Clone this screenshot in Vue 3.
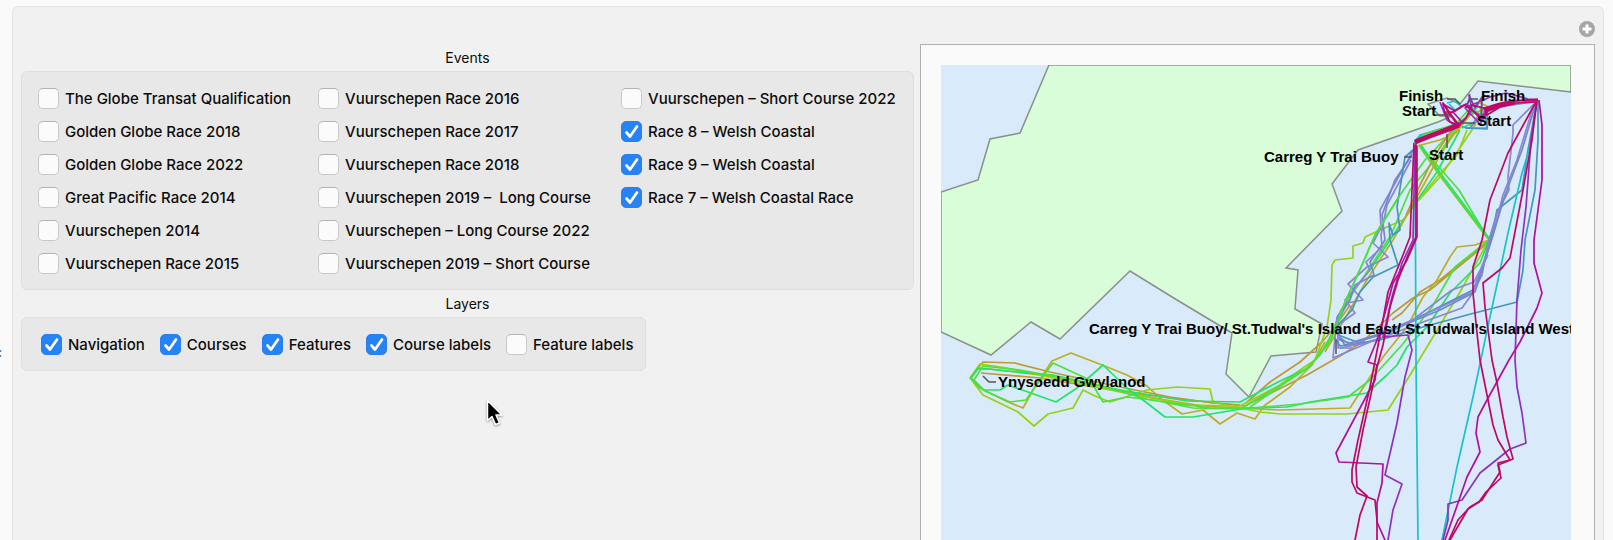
<script setup>
import { ref } from 'vue'

const eventColumns = ref([
  [
    { name: 'The Globe Transat Qualification', on: false },
    { name: 'Golden Globe Race 2018', on: false },
    { name: 'Golden Globe Race 2022', on: false },
    { name: 'Great Pacific Race 2014', on: false },
    { name: 'Vuurschepen 2014', on: false },
    { name: 'Vuurschepen Race 2015', on: false },
  ],
  [
    { name: 'Vuurschepen Race 2016', on: false },
    { name: 'Vuurschepen Race 2017', on: false },
    { name: 'Vuurschepen Race 2018', on: false },
    { name: 'Vuurschepen 2019 –  Long Course', on: false },
    { name: 'Vuurschepen – Long Course 2022', on: false },
    { name: 'Vuurschepen 2019 – Short Course', on: false },
  ],
  [
    { name: 'Vuurschepen – Short Course 2022', on: false },
    { name: 'Race 8 – Welsh Coastal', on: true },
    { name: 'Race 9 – Welsh Coastal', on: true },
    { name: 'Race 7 – Welsh Coastal Race', on: true },
  ],
])

const layers = ref([
  { name: 'Navigation', on: true },
  { name: 'Courses', on: true },
  { name: 'Features', on: true },
  { name: 'Course labels', on: true },
  { name: 'Feature labels', on: false },
])

const tracks = [
  // western leg
  { c: 'orange', p: '1489,242 1430,290 1413,298 1393,313 1362,342 1340,356 1307,375 1273,392 1245,406 1170,398 1100,388 1040,378 981,373' },
  { c: 'orange', p: '1489,240 1440,280 1420,292 1402,313 1392,320' },
  { c: 'olive', p: '1489,240 1475,245 1457,247 1450,257 1437,280 1423,297 1407,327 1383,357 1350,408 1280,410 1240,408 1203,406 1160,399 1110,388 1050,376 990,369 978,369 971,378 978,387 1008,402 1023,408 1033,390 1052,361 1071,353 1102,365 1127,375 1147,386 1160,398 1182,414 1203,410 1220,424 1237,413 1255,419 1264,406 1290,387 1312,365 1325,342' },
  { c: 'orange', p: '1240,405 1213,403 1170,397 1120,387 1050,372 1015,363 983,362 973,374' },
  { c: 'orange', p: '1246,403 1270,382 1300,362 1322,342 1334,328 1350,305' },
  { c: 'lime', p: '1489,240 1460,292 1433,337 1407,380 1388,410 1347,414 1280,414 1260,412 1230,406 1213,402 1210,389 1177,387 1147,390 1110,402 1095,396 1083,390 1073,408 1048,414 1034,426 1018,412 983,395 970,378 980,364 1007,368 1053,378 1120,392 1187,405 1240,406 1280,385 1300,370 1315,360 1327,327 1331,300 1332,265 1335,260 1353,258 1353,246 1363,243 1365,237 1380,230 1403,220 1417,202 1437,177 1457,155 1467,130' },
  { c: 'green', p: '1489,240 1480,263 1450,293 1427,327 1407,347 1397,365 1387,375 1367,393 1310,402 1287,407 1247,408 1193,417 1165,417 1147,403 1127,388 1103,365 1077,388 1056,402 1028,392 1008,385 1000,390 983,390 971,378 978,368 1007,371 1053,375 1120,390 1187,401 1240,402 1280,381 1306,369 1320,355 1337,325 1350,295 1372,267 1400,225 1437,172 1460,130' },
  { c: 'leaf', p: '1489,240 1455,267 1432,307 1402,345 1370,380 1348,397 1300,404 1240,409 1193,408 1153,400 1127,397 1103,402 1090,380 1053,363 1035,387 1026,400 1010,402 985,391 974,380 983,366 1020,370 1090,383 1150,400 1210,408 1242,408 1282,384 1308,368 1327,345 1341,310 1365,275 1391,235 1410,190 1437,157 1458,125' },
  { c: 'leaf', p: '1421,147 1430,157 1459,190 1489,240' },
  { c: 'olive', p: '1420,147 1440,176 1488,239' },
  { c: 'green', p: '1421,145 1441,174 1489,238' },
  { c: 'leaf', p: '1419,145 1442,178 1487,237' },
  { c: 'leaf', p: '1458,125 1425,160 1400,195 1375,235 1362,265 1345,302 1330,342 1310,366 1250,407' },
  { c: 'olive', p: '1462,122 1440,155 1418,195 1393,240 1368,278 1343,322 1325,352' },
  { c: 'orange', p: '1455,125 1435,155 1420,185 1406,215' },
  { c: 'lime', p: '1476,124 1455,155 1440,177 1419,200' },

  // outbound, western shore
  { c: 'indigo', p: '1413,150 1408,160 1380,210 1381,227 1373,243 1388,257 1367,267 1348,284 1363,300 1347,303 1337,317 1335,337 1333,358 1370,342' },
  { c: 'slate', p: '1412,155 1395,180 1382,215 1385,240 1370,262 1374,275 1355,285 1350,300 1338,318 1338,335 1345,345 1365,342' },
  { c: 'indigo', p: '1411,160 1387,205 1381,235 1382,247 1366,262 1370,270 1345,300 1355,313 1338,325 1338,348 1352,348' },
  { c: 'blue', p: '1413,150 1405,157 1397,207 1400,230 1393,235 1389,223 1390,240 1398,265 1373,277 1360,292 1352,310 1338,325 1340,340 1357,345 1385,337' },
  { c: 'leaf', p: '1400,195 1375,235 1362,265 1345,302 1330,342' },

  // return, eastern side
  { c: 'blue', p: '1538,100 1538,140 1535,190 1525,240 1523,270 1517,302 1467,315 1423,327 1380,340 1340,346 1335,338' },
  { c: 'blue', p: '1537,101 1528,150 1522,190 1497,210 1493,230 1483,267 1473,290 1437,308 1390,332 1357,342 1338,335' },
  { c: 'indigo', p: '1534,104 1513,125 1513,133 1508,177 1509,190 1497,213 1488,243 1482,275 1472,294 1462,308 1423,322 1370,342 1340,348' },
  { c: 'indigo', p: '1534,104 1517,160 1503,195 1493,235 1473,292 1430,312 1385,332 1350,345 1338,336' },
  { c: 'slate', p: '1535,106 1522,150 1505,195 1490,245 1475,292 1440,310 1392,330 1350,343' },
  { c: 'indigo', p: '1488,255 1474,282 1452,290 1410,322' },
  { c: 'cyan', p: '1537,100 1530,147 1522,173 1508,233 1498,280 1485,340 1473,397 1457,467 1442,540 1430,600 1430,640' },
  { c: 'cyan', p: '1415,145 1416,360 1418,540 1420,640' },
  { c: 'purple', p: '1537,100 1531,140 1526,207 1521,250 1517,300 1515,360 1517,387 1522,413 1526,443 1510,449 1480,473 1462,500 1448,504 1448,520 1443,540 1430,640' },
  { c: 'purple', p: '1415,145 1413,240 1402,263 1392,297 1383,337 1408,335 1412,350 1405,377 1397,423 1385,475 1402,484 1393,510 1388,540 1388,640' },
  { c: 'magenta', p: '1539,100 1542,125 1542,180 1534,240 1534,263 1542,293 1537,308 1520,342 1509,360 1487,400 1478,417 1476,433 1480,452 1467,477 1458,503 1445,540 1430,640' },
  { c: 'magenta', p: '1417,145 1417,237 1407,260 1393,283 1385,313 1377,340 1368,362 1377,365 1375,380 1336,453 1339,462 1383,464 1382,483 1377,503 1377,522 1385,540 1400,640' },
  { c: 'crimson', p: '1537,100 1526,120 1508,153 1490,200 1482,240 1473,267 1473,293 1477,333 1480,360 1493,425 1498,440 1510,460 1498,463 1500,472 1482,500 1470,507 1458,520 1449,540 1430,600' },
  { c: 'crimson', p: '1537,100 1532,140 1523,190 1510,258 1502,268 1483,283 1485,307 1492,360 1497,383 1503,417 1507,437 1513,459 1498,465 1501,478 1486,492 1479,502 1468,509 1450,540 1430,600' },
  { c: 'crimson', p: '1414,143 1410,237 1403,255 1388,292 1383,320 1370,387 1358,440 1352,470 1352,482 1357,493 1375,500 1377,520 1377,540 1377,640' },
  { c: 'crimson', p: '1416,143 1416,237 1408,255 1398,280 1390,307 1383,345 1377,367 1363,430 1356,467 1357,487 1367,496 1360,515 1355,540 1350,640' },

  // harbour approaches
  { c: 'cyan', p: '1447,103 1455,101 1462,107 1455,110 1449,104' },
  { c: 'green', p: '1415,141 1422,135 1445,128 1458,123 1470,115 1478,106 1484,112 1475,122 1462,128' },
  { c: 'cyan', p: '1414,143 1420,135 1440,129 1459,126 1468,128 1487,128 1485,118 1470,107' },
  { c: 'leaf', p: '1416,144 1424,134 1456,124 1470,108 1482,102 1480,120 1470,126' },
  { c: 'green', p: '1415,142 1421,137 1443,130 1464,121 1475,110 1466,106' },
  { c: 'olive', p: '1417,146 1440,140 1456,133 1470,115 1489,107 1480,103' },
  { c: 'indigo', p: '1537,101 1500,107 1485,113 1470,128 1478,116 1468,104 1470,94' },
  { c: 'blue', p: '1537,100 1500,106 1487,110 1487,129 1465,128' },
  { c: 'purple', p: '1440,102 1447,120 1458,127 1472,110 1469,95 1475,108 1482,97 1481,125 1465,108 1490,97 1506,93 1528,99 1538,100' },
  { c: 'magenta', p: '1415,142 1444,129 1462,122 1453,112 1445,115 1443,104 1455,111 1466,104 1480,118 1492,106 1510,101 1538,99' },
  { c: 'crimson heavy', p: '1415,142 1430,136 1452,128 1459,125' },
  { c: 'crimson', p: '1459,127 1449,113 1443,103 1452,116 1459,125 1450,122 1445,112 1453,112 1464,105 1472,110 1483,119 1490,107 1500,104 1515,101 1538,100' },
  { c: 'crimson', p: '1459,126 1466,118 1472,105 1484,108 1487,115 1500,107 1515,103 1537,102' },
  { c: 'crimson heavy', p: '1484,110 1500,105 1515,102' },
]

const places = [
  { x: 1399, y: 101, t: 'Finish' },
  { x: 1402, y: 116, t: 'Start' },
  { x: 1481, y: 101, t: 'Finish' },
  { x: 1477, y: 126, t: 'Start' },
  { x: 1429, y: 160, t: 'Start' },
  { x: 1264, y: 162, t: 'Carreg Y Trai Buoy' },
  { x: 1089, y: 334, t: "Carreg Y Trai Buoy/ St.Tudwal's Island East/ St.Tudwal's Island West" },
  { x: 998, y: 387, t: 'Ynysoedd Gwylanod' },
]
</script>

<template>
  <div class="page">
    <span class="prompt">:</span>
    <main class="panel">
      <header class="bar">
        <button class="more" type="button" aria-label="Options">
          <svg viewBox="0 0 16 16" width="16" height="16">
            <circle cx="8" cy="8" r="8" fill="#a6a6a6" />
            <path d="M8 3.5v9M3.5 8h9" stroke="#fff" stroke-width="3" />
          </svg>
        </button>
      </header>

      <div class="columns">
        <div class="controls">
          <h2 class="heading">Events</h2>
          <div class="group events">
            <div v-for="(column, i) in eventColumns" :key="i" class="column">
              <label v-for="item in column" :key="item.name" class="option">
                <input v-model="item.on" class="tick" type="checkbox" />
                <span>{{ item.name }}</span>
              </label>
            </div>
          </div>
          <h2 class="heading">Layers</h2>
          <div class="group layers">
            <label v-for="item in layers" :key="item.name" class="option">
              <input v-model="item.on" class="tick" type="checkbox" />
              <span>{{ item.name }}</span>
            </label>
          </div>
        </div>

        <div class="frame">
          <svg class="map" viewBox="941 65 630 560">
            <rect x="941" y="65" width="630" height="560" fill="#d9eafb" />
            <path
              class="land"
              d="M1049 65 1020 133 990 139 978 180 941 192V332L991 355 1031 322 1060 339 1130 271 1177 300 1232 333 1226 374 1249 397 1271 356 1316 352 1322 324 1295 309 1298 270 1286 268 1342 211 1332 184 1358 150 1438 122 1452 116 1440 116 1428 104 1447 98 1460 104 1478 81 1571 92V65Z"
            />
            <polyline
              v-for="(track, i) in tracks"
              :key="i"
              class="track"
              :class="track.c"
              :points="track.p"
            />
            <path
              class="leader"
              d="M1447 99h8l5 5M1478 99h-8l-3 5M1436 115h14M1475 123h-14M1447 134v14M1404 157h8M1336 340v14M983 376l6 6h7"
            />
            <text v-for="(p, i) in places" :key="i" class="place" :x="p.x" :y="p.y">{{ p.t }}</text>
          </svg>
        </div>
      </div>
    </main>

    <svg class="pointer" viewBox="0 0 18 27" width="18" height="27">
      <path
        d="M1.500 1.500V21.500L6 17.500 9.500 25.500 13.500 24 10 16H16Z"
        fill="#000"
        stroke="#fff"
        stroke-width="1.500"
        stroke-linejoin="round"
      />
    </svg>
  </div>
</template>

<style>
body {
  background: #fafafa;
}
</style>

<style scoped>
.page {
  position: relative;
  box-sizing: border-box;
  height: 100vh;
  overflow: hidden;
  padding: 6px 9px 0 12px;
  background: #fafafa;
  color: #0c0c0c;
  font-family: Inter, 'Liberation Sans', sans-serif;
  font-size: 15px;
  font-weight: 500;
}

.prompt {
  position: absolute;
  left: -2px;
  top: 344px;
  color: #4f7590;
  font-size: 14px;
  line-height: 16px;
}

.panel {
  box-sizing: border-box;
  min-height: 100%;
  padding: 0 8px;
  border: 1px solid #e3e3e3;
  border-radius: 6px;
  background: #f1f1f1;
}

.bar {
  display: flex;
  justify-content: flex-end;
  height: 23px;
  padding-top: 14px;
}

.more {
  width: 16px;
  height: 16px;
  padding: 0;
  border: 0;
  background: none;
}

.more svg {
  display: block;
}

.columns {
  display: grid;
  grid-template-columns: 893fr 675fr;
  gap: 6px;
}

.controls {
  min-width: 0;
}

.heading {
  margin: 0;
  font-size: 14px;
  font-weight: 400;
  line-height: 27px;
  text-align: center;
}

.group {
  box-sizing: border-box;
  border: 1px solid #dedede;
  border-radius: 6px;
  background: #e8e8e8;
}

.events {
  display: grid;
  grid-template-columns: 280fr 303fr 292fr;
  padding: 10px 0 9px 16px;
}

.layers {
  display: flex;
  width: fit-content;
  gap: 15px;
  padding: 10px 12px 9px 19px;
}

.option {
  display: flex;
  align-items: center;
  gap: 6px;
  height: 33px;
  white-space: pre;
}

.tick {
  appearance: none;
  box-sizing: border-box;
  flex: none;
  width: 21px;
  height: 21px;
  margin: 0;
  border: 1px solid #c8c8c8;
  border-top-color: #b4b4b4;
  border-radius: 5px;
  background: #fbfbfb;
}

.tick:checked {
  border-color: #2a80f0;
  background: #2583f7
    url("data:image/svg+xml,%3Csvg xmlns='http://www.w3.org/2000/svg' viewBox='0 0 19 19'%3E%3Cpath d='M4.500 10.500 8 14.500 15 4.500' fill='none' stroke='white' stroke-width='2.700' stroke-linecap='round' stroke-linejoin='round'/%3E%3C/svg%3E")
    center / 19px 19px no-repeat;
}

.frame {
  box-sizing: border-box;
  min-width: 0;
  padding: 20px 23px 20px 20px;
  border: 1px solid #b0b0b0;
  background: #fafafa;
}

.map {
  display: block;
  width: 100%;
  overflow: hidden;
}

.land {
  fill: #d9fdd9;
  stroke: #8a908a;
  stroke-width: 1.500;
}

.track {
  fill: none;
  stroke-width: 1.700;
  stroke-linejoin: round;
}

.track.heavy { stroke-width: 5; }
.orange { stroke: #bc9a35; }
.olive { stroke: #bcae20; }
.lime { stroke: #94d312; }
.leaf { stroke: #4be23c; }
.green { stroke: #20e468; }
.cyan { stroke: #18c3cb; }
.blue { stroke: #4595c0; }
.slate { stroke: #7088c6; }
.indigo { stroke: #8a86d2; }
.purple { stroke: #8d32bd; }
.magenta { stroke: #b0109b; }
.crimson { stroke: #bd0866; }

.leader {
  fill: none;
  stroke: #555;
  stroke-width: 1.500;
}

.place {
  fill: #000;
  font: bold 15px 'Liberation Sans', Arial, sans-serif;
}

.pointer {
  position: absolute;
  left: 486px;
  top: 399px;
  filter: drop-shadow(0 1px 1px #0006);
}
</style>
